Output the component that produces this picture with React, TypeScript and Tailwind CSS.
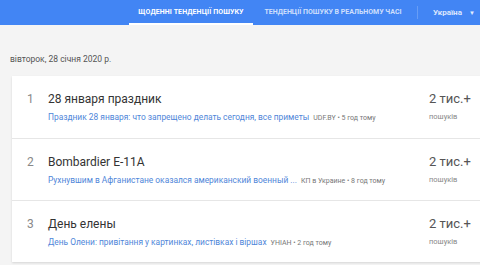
import React from "react";

const rows = [
  {
    n: "1",
    title: "28 января праздник",
    link: "Праздник 28 января: что запрещено делать сегодня, все приметы",
    meta: "UDF.BY • 5 год тому",
  },
  {
    n: "2",
    title: "Bombardier E-11A",
    link: "Рухнувшим в Афганистане оказался американский военный ...",
    meta: "КП в Украине • 8 год тому",
  },
  {
    n: "3",
    title: "День елены",
    link: "День Олени: привітання у картинках, листівках і віршах",
    meta: "УНІАН • 2 год тому",
  },
];

export default function App() {
  return (
    <div
      className="w-[480px] h-[265px] overflow-hidden bg-[#f4f4f4]"
      style={{ fontFamily: "Roboto, 'Noto Sans', sans-serif" }}
    >
      <div className="h-[25px] bg-[#4285f4] flex items-stretch">
        <div className="w-[129px]" />
        <div className="w-[124px] relative flex items-center justify-center text-[7px] font-bold text-white tracking-[0.1px]">
          ЩОДЕННІ ТЕНДЕНЦІЇ ПОШУКУ
          <div className="absolute left-0 right-0 bottom-0 h-[2px] bg-white" />
        </div>
        <div className="w-[160px] flex items-center justify-center text-[7px] font-bold text-white/75">
          ТЕНДЕНЦІЇ ПОШУКУ В РЕАЛЬНОМУ ЧАСІ
        </div>
        <div className="w-px my-[6px] bg-white/20 ml-[4px]" />
        <div className="flex items-center ml-[15px] text-[8px] font-semibold text-white/85">
          Україна
          <span className="ml-[7px] text-[6px]">▼</span>
        </div>
      </div>

      <div className="pl-[10px] pt-[28px] h-[51px] text-[8.5px] text-[#555]">
        вівторок, 28 січня 2020 р.
      </div>

      <div className="ml-[12px] w-[480px] bg-white shadow-[0_1px_2px_rgba(0,0,0,0.12)]">
        {rows.map((r, i) => (
          <div
            key={r.n}
            className={`flex h-[62px] ${i > 0 ? "border-t border-[#e6e6e6]" : ""}`}
          >
            <div className="w-[36px] pl-[15px] pt-[15px] text-[12px] leading-[16px] text-[#888]">
              {r.n}
            </div>
            <div className="w-[381px] pt-[15px]">
              <div className="text-[12px] leading-[16px] text-[#333]">{r.title}</div>
              <div className="mt-[4px] text-[8.4px] leading-[12px] whitespace-nowrap">
                <span className="text-[#4f86d9]">{r.link}</span>
                <span className="ml-[4px] text-[7px] text-[#777]">{r.meta}</span>
              </div>
            </div>
            <div className="pt-[14px]">
              <div className="text-[13px] leading-[18px] text-[#555]">2 тис.+</div>
              <div className="mt-[3px] text-[7.5px] leading-[12px] text-[#888]">пошуків</div>
            </div>
          </div>
        ))}
      </div>
    </div>
  );
}
